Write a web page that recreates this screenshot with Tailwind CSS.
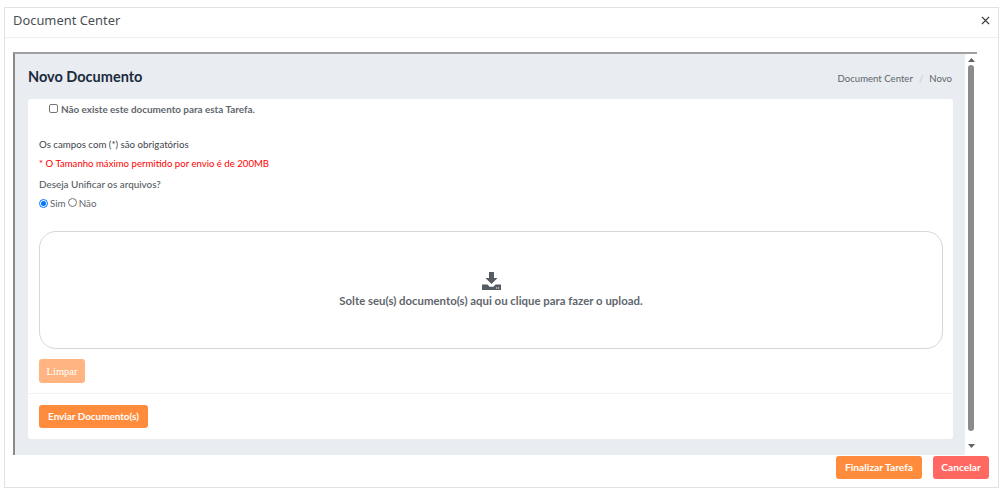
<!DOCTYPE html>
<html lang="pt-BR">
<head>
    <meta charset="UTF-8">
    <title>Document Center</title>
    <script src="https://cdn.jsdelivr.net/npm/@tailwindcss/browser@4"></script>
</head>
<body class="bg-white h-[495px] overflow-hidden font-['Lato',sans-serif]">
    <div class="pt-[7px] pl-1 w-[999px]">
        <!-- Modal -->
        <div class="border border-[#e2e2e2] h-[481px] flex flex-col bg-white">
            <div class="h-[30px] border-b border-[#efefef] flex items-center justify-between pl-2 pr-[8px] pb-1 shrink-0">
                <h1 class="text-[12.9px] text-[#4a4f55] font-['Noto_Sans',sans-serif]">Document Center</h1>
                <svg class="w-[9px] h-[9px]" viewBox="0 0 10 10" fill="none" stroke="#333" stroke-width="1.4"><path d="M1 1l8 8M9 1l-8 8"/></svg>
            </div>

            <!-- Frame -->
            <div class="ml-2 mt-[14px] w-[964px] h-[403px] border-t-2 border-l-2 border-t-[#a0a0a0] border-l-[#8a8a8a] flex shrink-0">
                <div class="flex-1 bg-[#e9ecf0] pl-[13px] pr-[12px] flex flex-col">
                    <div class="h-[45px] flex items-center justify-between shrink-0">
                        <h2 class="text-[14.5px] font-bold text-[#1b2a3d]">Novo Documento</h2>
                        <div class="text-[9.6px] text-[#5f666d] flex gap-[6px] pt-[5px] pr-[1px]">
                            <span>Document Center</span><span class="text-[#c4c8cc]">/</span><span>Novo</span>
                        </div>
                    </div>

                    <!-- Card -->
                    <div class="bg-white rounded-[3px] h-[340px] w-[925px] flex flex-col shrink-0">
                        <div class="px-[11px] flex-1">
                            <label class="flex items-center gap-[3px] pl-[10px] h-[20px] text-[9.9px] font-bold text-[#5f666d]">
                                <span class="w-[9px] h-[9px] border border-[#767676] rounded-[2px] bg-white -mt-[2px]"></span>
                                Não existe este documento para esta Tarefa.
                            </label>
                            <p class="text-[9.7px] text-[#3d4349] mt-[19px] leading-[13px]">Os campos com (*) são obrigatórios</p>
                            <p class="text-[9.6px] text-[#ff0000] mt-[6px] leading-[13px]">* O Tamanho máximo permitido por envio é de 200MB</p>
                            <p class="text-[9.9px] font-medium text-[#555c63] mt-[8px] leading-[13px]">Deseja Unificar os arquivos?</p>
                            <div class="flex items-center mt-[5px] text-[9.8px] text-[#5f666d] h-[14px]">
                                <span class="w-[9px] h-[9px] rounded-full border border-[#0075ff] flex items-center justify-center"><span class="w-[5px] h-[5px] rounded-full bg-[#0075ff]"></span></span>
                                <span class="ml-[2px]">Sim</span>
                                <span class="w-[9px] h-[9px] rounded-full border border-[#767676] ml-[2px] -mt-[2px]"></span>
                                <span class="ml-[2px]">Não</span>
                            </div>
                            <!-- Dropzone -->
                            <div class="mt-[21px] h-[118px] w-[904px] border border-[#d5d7da] rounded-[17px] flex flex-col items-center justify-center pt-[1px]">
                                <svg class="w-[19px] h-[18px]" viewBox="0 0 19 18" fill="#555c63"><path d="M7 0h5v6h3.500l-6 6-6-6H7z"/><path d="M0 12.500h5.500l2 2.200h4l2-2.200H19V18H0z"/><path d="M14 15.500h1.200v1H14zM16 15.500h1.200v1H16z" fill="#fff"/></svg>
                                <p class="text-[11.4px] font-bold text-[#5f666d] mt-[2px]">Solte seu(s) documento(s) aqui ou clique para fazer o upload.</p>
                            </div>
                            <button class="mt-[10px] w-[46px] h-[24px] rounded-[3px] bg-[#ffb482] text-white text-[10.5px] font-['Liberation_Serif',serif] block pt-[1px]">Limpar</button>
                        </div>
                        <div class="border-t border-[#f1f1f1] h-[46px] px-[11px] pt-[11px] shrink-0">
                            <button class="w-[109px] h-[23px] rounded-[3px] bg-[#ff8c3c] text-white text-[9.9px] font-bold block">Enviar Documento(s)</button>
                        </div>
                    </div>
                </div>

                <!-- Scrollbar -->
                <div class="w-[12px] bg-white flex flex-col items-center shrink-0">
                    <svg class="w-[7px] h-[4px] mt-[4px]" viewBox="0 0 7 4" fill="#606060"><path d="M3.500 0L7 4H0z"/></svg>
                    <div class="w-[6px] h-[366px] mt-[3px] rounded-[4px] bg-[#8b8b8b]"></div>
                    <svg class="w-[7px] h-[4px] mt-[13px]" viewBox="0 0 7 4" fill="#606060"><path d="M0 0h7L3.500 4z"/></svg>
                </div>
            </div>

            <!-- Footer -->
            <div class="flex justify-end gap-[11px] pr-[9px] pt-[1px]">
                <button class="w-[86px] h-[23px] rounded-[3px] bg-[#ff8c3c] text-white text-[10.2px] font-bold">Finalizar Tarefa</button>
                <button class="w-[56px] h-[23px] rounded-[3px] bg-[#ff6961] text-white text-[10.2px] font-bold">Cancelar</button>
            </div>
        </div>
    </div>
</body>
</html>
